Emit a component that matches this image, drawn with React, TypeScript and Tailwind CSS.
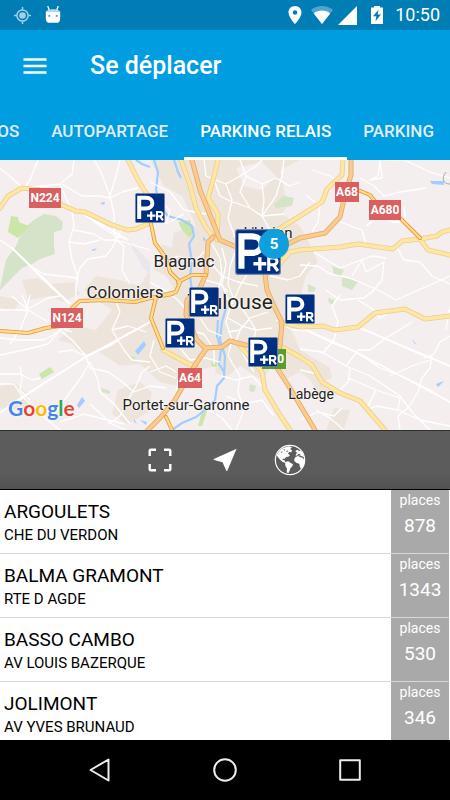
import React from 'react';

interface MapPin {
  id: string;
  x: number;
  y: number;
}

interface MapLabel {
  text: string;
  x: number;
  y: number;
  className: string;
}

interface Parking {
  name: string;
  address: string;
  places: number;
}

const MAP_WIDTH = 450;
const MAP_HEIGHT = 270;

const tabs = ['VÉLOS', 'AUTOPARTAGE', 'PARKING RELAIS', 'PARKING'];

const parkings: Parking[] = [
  { name: 'ARGOULETS', address: 'CHE DU VERDON', places: 878 },
  { name: 'BALMA GRAMONT', address: 'RTE D AGDE', places: 1343 },
  { name: 'BASSO CAMBO', address: 'AV LOUIS BAZERQUE', places: 530 },
  { name: 'JOLIMONT', address: 'AV YVES BRUNAUD', places: 346 },
];

// Centre of each pin on the map canvas
const pins: MapPin[] = [
  { id: 'nord-ouest', x: 150, y: 48 },
  { id: 'ouest', x: 204, y: 142 },
  { id: 'sud-ouest', x: 180, y: 173 },
  { id: 'est', x: 300, y: 149 },
  { id: 'sud-est', x: 263, y: 192 },
];

const labels: MapLabel[] = [
  { text: "L'Union", x: 268, y: 73, className: 'text-[15px]' },
  { text: 'Blagnac', x: 184, y: 102, className: 'text-[17px]' },
  { text: 'Colomiers', x: 125, y: 133, className: 'text-[17px]' },
  { text: 'Toulouse', x: 230, y: 143, className: 'text-[21px]' },
  { text: 'Labège', x: 311, y: 234, className: 'text-[14px]' },
  { text: 'Portet-sur-Garonne', x: 186, y: 245, className: 'text-[15px]' },
];

const shields: MapLabel[] = [
  { text: 'N224', x: 45, y: 38, className: 'w-8 bg-[#d95f60]' },
  { text: 'A68', x: 347, y: 32, className: 'w-6 bg-[#d95f60]' },
  { text: 'A680', x: 385, y: 50, className: 'w-8 bg-[#d95f60]' },
  { text: 'N124', x: 67, y: 158, className: 'w-8 bg-[#d95f60]' },
  { text: 'A64', x: 190, y: 218, className: 'w-6 bg-[#d95f60]' },
  { text: 'E80', x: 274, y: 199, className: 'w-6 bg-[#5b9b31]' },
];

const urbanAreas = [
  'M150 160 L215 160 L300 160 L298 190 L282 214 L300 226 L310 245 L318 262 L306 275 L300 300 L292 330 L300 350 L330 368 L332 378 L316 384 L300 372 L284 380 L272 366 L262 380 L240 366 L228 376 L206 372 L186 388 L160 382 L140 364 L120 366 L96 350 L84 356 L72 344 L58 340 L74 326 L96 330 L112 310 L96 300 L84 290 L96 276 L120 280 L140 286 L150 270 L164 264 L160 240 L176 232 L196 226 L182 196 L164 186Z',
  'M22 280 L38 278 L48 284 L74 282 L80 294 L62 302 L50 296 L28 300Z',
  'M0 386 L14 382 L30 396 L26 410 L0 408Z',
  'M118 390 L140 382 L152 392 L148 412 L128 424 L112 414Z',
  'M310 380 L330 384 L336 396 L318 394Z',
  'M334 408 L350 410 L344 430 L326 430Z',
  'M0 296 L20 300 L14 312 L0 308Z',
  'M112 300 L150 296 L156 320 L140 340 L118 328Z',
];

const cleanAreas = [
  'M236 168 L262 162 L276 176 L262 190 L244 186Z',
  'M160 222 L174 226 L172 248 L160 244Z',
  'M150 268 L166 276 L176 292 L150 290Z',
  'M180 374 L216 366 L212 396 L180 398Z',
  'M236 382 L262 378 L270 400 L244 402Z',
  'M280 170 L300 160 L300 208 L286 200Z',
];

const greenAreas = [
  'M0 288 L6 260 L16 246 L24 228 L34 220 L44 214 L56 216 L63 222 L62 230 L54 232 L54 246 L55 254 L40 259 L32 264 L22 268 L14 276 L0 290Z',
  'M274 204 L284 196 L294 198 L292 206 L276 208Z',
  'M332 266 L344 270 L340 278 L334 274Z',
  'M342 276 L358 282 L352 290 L342 286Z',
  'M308 284 L316 288 L314 292 L308 292Z',
  'M101 388 L110 391 L110 394 L102 392Z',
  'M130 356 L136 357 L137 361 L131 359Z',
  'M250 384 L256 386 L254 392 L249 391Z',
  'M328 298 L334 300 L333 305 L329 303Z',
];

const brightGreenAreas = [
  'M11 216 L18 217 L19 222 L29 226 L18 238 L8 232Z',
  'M178 222 L190 220 L194 232 L190 238 L182 230Z',
  'M39 374 L50 367 L54 372 L42 379Z',
  'M204 404 L208 408 L202 426 L198 426Z',
  'M212 360 L217 362 L216 367 L211 366Z',
];

const waterAreas = [
  'M135 351 L144 341 L146 345 L138 355Z',
  'M77 405 L82 397 L85 401 L79 408Z',
  'M430 181 L444 181 L444 185 L432 184Z',
  'M436 384 L444 381 L438 387Z',
  'M412 339 L417 345 L414 343Z',
  'M134 419 L137 424 L134 422Z M140 420 L147 422 L146 425Z',
  'M100 203 L105 202 L104 205Z M91 250 L97 248 L94 251Z',
  'M203 236 L206 240 L203 241Z',
];

const rivers = [
  'M154 160 L158 172 L156 190 L160 206 L168 216 L182 220 L192 226 L194 236 L189 244 L192 262 L190 276 L192 292 L200 298',
  'M174 160 L178 172 L181 178',
  'M224 292 L226 308 L222 322 L220 340 L225 356 L224 378 L217 386 L215 400 L206 409 L196 417 L182 423 L172 430',
  'M218 320 L217 336 L221 350 L219 364 L224 372',
  'M136 160 L142 164 L150 167',
];

const minorRoads = [
  'M0 168 L22 187 L28 185',
  'M38 160 L30 180 L24 188 L44 186 L60 184 L72 174 L74 160',
  'M60 184 L66 198 L72 211 L74 226 L69 242 L72 260 L78 276 L76 286 L76 300',
  'M62 184 L82 196 L100 196 L110 198 L122 192 L138 188',
  'M94 160 L100 170 L104 180 L110 196 L114 214 L114 230 L116 240 L130 244 L150 250',
  'M120 160 L116 176 L110 196',
  'M74 230 L94 234 L104 240 L116 240',
  'M69 242 L84 244 L100 240',
  'M85 215 L100 226 L116 236 L128 240',
  'M122 228 L112 248 L106 256 L88 259 L80 268 L76 280',
  'M0 240 L12 248 L30 266 L52 288 L70 304',
  'M30 266 L44 274 L78 278',
  'M116 240 L124 246 L122 270 L130 284',
  'M0 310 L26 310 L48 298 L60 296',
  'M22 295 L28 310 L20 330 L10 344',
  'M12 296 L28 310 L48 322',
  'M30 295 L26 312',
  'M0 355 L24 350 L48 344 L62 328 L72 332',
  'M0 338 L20 340 L44 340 L62 330',
  'M62 332 L72 340 L86 356 L90 368 L108 372 L120 380 L134 392',
  'M0 413 L20 398 L46 382 L84 358 L118 340 L140 328 L150 322',
  'M0 374 L20 374 L32 380 L40 378',
  'M20 366 L22 378 L20 390 L30 400',
  'M0 384 L14 384 L22 396 L34 408 L50 422 L60 430',
  'M90 362 L82 376 L66 398 L50 420',
  'M58 352 L72 350 L86 356 L110 346 L130 332',
  'M90 362 L98 380 L100 392 L114 404 L130 424',
  'M114 296 L120 312 L112 330 L124 350 L132 360 L150 362',
  'M112 330 L128 326 L146 332',
  'M150 366 L142 372 L136 386 L128 400 L120 416 L108 424',
  'M60 422 L84 414 L108 420 L124 424',
  'M90 404 L112 424 L126 430',
  'M134 392 L150 386 L166 388',
  'M150 182 L170 192 L184 210 L206 214',
  'M158 200 L170 210 L166 224 L184 214',
  'M204 160 L206 176 L226 184 L240 176 L256 166 L262 160',
  'M226 184 L232 200 L228 218 L236 240',
  'M240 160 L246 176 L262 184 L276 178 L290 186 L300 182',
  'M246 176 L240 192 L250 208 L262 216 L284 214',
  'M262 184 L264 200 L262 216 L270 230',
  'M284 160 L282 176 L276 196 L262 216',
  'M214 180 L220 196 L228 200 L250 208',
  'M212 244 L220 258 L222 276 L218 290',
  'M222 248 L226 264 L222 284 L228 300',
  'M236 250 L230 266 L228 284 L234 300',
  'M210 262 L222 276 L238 282 L258 286',
  'M206 280 L220 284 L228 292',
  'M258 252 L250 270 L240 286 L232 304',
  'M270 276 L288 280 L300 276 L310 262',
  'M206 250 L194 262 L178 256 L166 262',
  'M150 282 L164 290 L178 300 L188 312',
  'M200 318 L208 330 L222 336',
  'M188 330 L204 334 L214 350 L214 364',
  'M236 300 L246 314 L256 330 L252 346',
  'M228 318 L242 326 L256 330 L272 328',
  'M228 332 L240 330 L250 318 L268 312',
  'M242 326 L236 340 L244 356 L254 372',
  'M232 300 L226 322 L232 340 L228 356 L240 376 L238 392',
  'M150 372 L166 366 L180 374 L176 390',
  'M154 340 L150 356 L160 372 L176 378',
  'M180 348 L190 360 L206 358 L220 362',
  'M222 376 L236 380 L252 376 L262 386',
  'M226 396 L244 404 L262 400 L274 416',
  'M238 392 L244 410 L236 430',
  'M205 408 L222 418 L232 430',
  'M276 320 L292 330 L306 330 L330 342 L356 352 L380 368 L406 378 L430 390 L450 402',
  'M300 349 L322 352 L346 366 L370 376 L400 396 L412 412 L430 430',
  'M322 354 L334 340 L338 322 L332 306 L340 295',
  'M346 366 L358 350 L370 350 L386 338 L412 322',
  'M380 160 L378 176 L370 180 L382 178 L380 160',
  'M360 178 L374 186 L384 196 L400 192 L426 188',
  'M385 160 L404 160 L430 172 L450 178',
  'M312 170 L330 176 L342 184',
  'M306 195 L320 206 L318 222 L312 232',
  'M340 222 L362 230 L366 244',
  'M366 226 L380 216 L392 222 L408 222',
  'M404 206 L406 222 L412 228',
  'M314 252 L330 262 L340 268 L356 262 L372 256 L386 258',
  'M300 265 L318 266 L330 274 L350 278 L378 290 L396 300 L450 276',
  'M352 276 L362 260 L366 272 L384 262 L382 280 L372 292',
  'M396 246 L404 260 L420 262 L432 276 L450 284',
  'M374 290 L364 298 L340 300 L326 290',
  'M358 300 L374 310 L380 318 L396 308',
  'M360 328 L384 338 L410 350 L430 358 L450 366',
  'M424 358 L434 354 L440 342 L450 336',
  'M432 356 L430 368 L422 378 L418 392 L408 408 L398 416 L400 430',
  'M450 306 L446 330',
  'M350 368 L348 382 L340 390',
  'M348 378 L376 390 L400 398 L398 410',
  'M376 390 L366 410 L376 406 L398 410 L420 420 L450 426',
  'M390 376 L412 366 L430 360',
  'M316 410 L330 418 L344 430',
  'M300 420 L318 412 L334 416 L342 408',
  'M300 370 L318 374 L322 382',
];

const yellowRoads = [
  'M0 208 L8 196 L22 188 L40 190 L62 205 L76 211 L85 212 L110 224 L127 230 L136 229 L150 223',
  'M128 160 L138 180 L148 196',
  'M181 160 L190 185 L196 208 L205 226 L214 238',
  'M218 160 L212 184 L208 198 L218 214 L217 240',
  'M274 232 L300 216 L322 202 L327 189 L342 175 L343 160',
  'M280 264 L290 252 L300 250 L340 247 L358 244 L393 249 L402 241 L420 239 L437 236 L442 232 L450 230',
  'M420 239 L428 250 L450 255',
  'M163 350 L185 362 L196 367',
  'M240 346 L262 372 L265 390 L280 415 L290 430',
  'M280 322 L300 327 L323 326 L335 330 L358 327 L375 313 L405 309 L425 319 L450 316',
  'M280 346 L300 357 L312 365 L322 382 L340 393 L360 401 L385 430',
];

const orangeRoads = [
  'M192 160 L200 190 L210 215 L220 240 L234 246 L262 250 L284 246 L300 238 L325 233 L340 217 L345 195 L351 175 L351 160',
  'M213 237 L208 242 L206 274 L200 288 L187 300 L186 315 L197 340 L205 348 L222 347 L230 341 L245 345 L280 347',
  'M262 250 L267 290 L274 306 L282 322 L280 345 L275 365 L288 385 L300 405 L315 430',
  'M206 349 L195 365 L175 400 L160 418 L146 432',
];

const trunkRoads = [
  'M148 196 L151 224 L155 243 L166 258 L170 272 L180 282 L176 292 L156 297 L151 318 L163 348',
  'M178 282 L192 275 L206 275',
  'M0 331 L28 333 L46 328 L66 325 L72 308 L80 301 L105 300 L135 302 L150 298 L172 294',
  'M358 190 L370 195 L380 208 L400 218 L420 238',
  'M166 417 L172 430',
];

const Roads: React.FC<{ paths: string[]; edge: string; fill: string; width: number }> = ({
  paths,
  edge,
  fill,
  width
}) => (
  <g fill="none" strokeLinejoin="round" strokeLinecap="round">
    <path d={paths.join(' ')} stroke={edge} strokeWidth={width} />
    <path d={paths.join(' ')} stroke={fill} strokeWidth={width - 1.6} />
  </g>
);

const MapBackground = () => (
  <svg
    className="block h-full w-full"
    viewBox="0 160 450 270"
    preserveAspectRatio="none"
    aria-hidden="true"
  >
    <rect y="160" width="450" height="270" fill="#f5eeee" />
    <path d={urbanAreas.join(' ')} fill="#ede5dc" />
    <path d={cleanAreas.join(' ')} fill="#f5eeee" />
    <path d="M128 240 L150 262 L150 276 L142 266Z" fill="#e9e6ec" />
    <path d={greenAreas.join(' ')} fill="#d5e3c8" />
    <path d={brightGreenAreas.join(' ')} fill="#cbe6a8" />
    <path d={waterAreas.join(' ')} fill="#a3ccff" />
    <path d={rivers.join(' ')} fill="none" stroke="#a3ccff" strokeWidth="2.2" />
    <path d={minorRoads.join(' ')} fill="none" stroke="#ffffff" strokeWidth="1.3" strokeLinejoin="round" />
    <path d="M0 413 L46 382 L84 358 L150 322 M12 248 L70 304 M85 215 L128 240 M306 330 L356 352 L450 402 M360 328 L450 366" fill="none" stroke="#ffffff" strokeWidth="1.8" />
    <path d="M446 172 C441 178 443 184 450 184" fill="none" stroke="#aaa" />
    <Roads paths={yellowRoads} edge="#e9cf8d" fill="#ffe6a2" width={5} />
    <Roads paths={orangeRoads} edge="#e2a868" fill="#fbcb8b" width={5} />
    <Roads paths={trunkRoads} edge="#e49a35" fill="#ffd98c" width={4} />
  </svg>
);

const ParkAndRideIcon: React.FC<{ className: string }> = ({ className }) => (
  <svg className={className} viewBox="0 0 30 30" aria-hidden="true">
    <rect x="0.4" y="0.4" width="29.2" height="29.2" rx="1.5" fill="#002f80" stroke="#7387b4" strokeWidth="0.8" />
    <path d="M4.2 26 V4.8 H11 C19.5 4.8 19.5 15.6 11 15.6 H4.2" fill="none" stroke="#fff" strokeWidth="4" />
    <path d="M16.2 17.2 V28 M11 22.6 H20.6" stroke="#002f80" strokeWidth="4.6" />
    <path d="M16.2 18.4 V27 M12 22.7 H20.4" stroke="#fff" strokeWidth="2.2" />
    <path d="M22 27.4 V18.9 H25 C28.2 18.9 28.2 23.3 25 23.3 H22 M25 23.3 L28 27.4" fill="none" stroke="#fff" strokeWidth="2" />
  </svg>
);

const StatusBar = () => (
  <div className="flex h-[30px] shrink-0 items-center bg-[#007db5] pr-[10px] pl-[14px] text-white">
    <svg className="h-[17px] w-[17px]" viewBox="0 0 17 17" fill="none" stroke="#9fd0e8" aria-hidden="true">
      <circle cx="8.5" cy="8.5" r="5.6" strokeWidth="1.5" />
      <circle cx="8.5" cy="8.5" r="3.3" fill="#9fd0e8" stroke="none" />
      <path d="M8.5 0 V3 M8.5 14 V17 M0 8.5 H3 M14 8.5 H17" strokeWidth="1.5" />
    </svg>
    <svg className="ml-[14px] h-[18px] w-4" viewBox="0 0 16 18" aria-hidden="true">
      <path d="M2.8 0 L4.2 4 M13.2 0 L11.8 4" stroke="#fff" strokeWidth="1.3" />
      <path d="M0.8 5.6 H15.2 V10 C15.2 14.5 14.8 16.8 12 16.8 H4 C1.2 16.8 0.8 14.5 0.8 10Z" fill="#fff" />
      <path d="M1 5.8 C1.8 2.4 14.2 2.4 15 5.8Z" fill="#b9dceb" />
      <path d="M3.4 9 H5.2 V10.8 H3.4Z M10.8 9 H12.6 V10.8 H10.8Z" fill="#3f9dc7" />
    </svg>
    <div className="ml-auto flex items-center">
      <svg className="h-[18px] w-[14px]" viewBox="0 0 14 18" aria-hidden="true">
        <path d="M7 0 C3.3 0 0.5 2.8 0.5 6.4 C0.5 11 7 18 7 18 C7 18 13.5 11 13.5 6.4 C13.5 2.8 10.7 0 7 0Z M7 4.2 A2.3 2.3 0 1 1 7 8.8 A2.3 2.3 0 1 1 7 4.2Z" fill="#fff" fillRule="evenodd" />
      </svg>
      <svg className="ml-[9px] h-[18px] w-[22px]" viewBox="0 0 22 18" aria-hidden="true">
        <path d="M0 4 C6 -1.2 16 -1.2 22 4 L11 18Z" fill="#4da6cf" />
        <path d="M2.8 7.4 C7.5 3.6 14.5 3.6 19.2 7.4 L11 18Z" fill="#fff" />
      </svg>
      <svg className="ml-[5px] h-[19px] w-[19px]" viewBox="0 0 19 19" aria-hidden="true">
        <path d="M0 19 L19 0 V19Z" fill="#fff" />
      </svg>
      <svg className="ml-[14px] h-[18px] w-3" viewBox="0 0 12 18" aria-hidden="true">
        <path d="M0 1.5 H3 V0 H9 V1.5 H12 V18 H0Z" fill="#fff" />
        <path d="M7.5 3.8 L2 10.2 H5.3 L4.5 15.3 L10 8.6 H6.7Z" fill="#007db5" />
      </svg>
      <span className="ml-3 text-[18px] leading-5">10:50</span>
    </div>
  </div>
);

const Header = () => (
  <header className="shrink-0 bg-[#009de0] text-white">
    <div className="flex h-[72px] items-center px-[23px]">
      <button type="button" aria-label="Menu">
        <svg className="block h-4 w-6" viewBox="0 0 24 16" aria-hidden="true">
          <path d="M0.5 1.5 H23.5 M0.5 8 H23.5 M0.5 14.5 H23.5" stroke="#fff" strokeWidth="2.5" />
        </svg>
      </button>
      <h1 className="ml-[43px] text-[25px] font-medium leading-8">Se déplacer</h1>
    </div>
    <nav className="flex h-[58px] justify-end overflow-hidden">
      {tabs.map((tab) => (
        <button
          key={tab}
          type="button"
          className={
            tab === 'PARKING RELAIS'
              ? 'shrink-0 border-b-[3px] border-white px-4 pt-1 text-[17px] font-medium'
              : 'shrink-0 border-b-[3px] border-transparent px-4 pt-1 text-[17px] font-medium text-[#e2ecf2]'
          }
        >
          {tab}
        </button>
      ))}
    </nav>
  </header>
);

const toPosition = (x: number, y: number) => ({
  left: `${(x / MAP_WIDTH) * 100}%`,
  top: `${(y / MAP_HEIGHT) * 100}%`,
});

const ParkingMap = () => (
  <section className="relative h-[270px] shrink-0 overflow-hidden" aria-label="Carte">
    <MapBackground />
    {shields.map((shield) => (
      <span
        key={shield.text}
        className={`absolute -translate-x-1/2 -translate-y-1/2 text-center text-[12px] font-bold leading-5 text-white ${shield.className}`}
        style={toPosition(shield.x, shield.y)}
      >
        {shield.text}
      </span>
    ))}
    {labels.map((label) => (
      <span
        key={label.text}
        className={`absolute -translate-x-1/2 -translate-y-1/2 whitespace-nowrap text-[#222] [text-shadow:0_0_2px_#fff,0_0_2px_#fff] ${label.className}`}
        style={toPosition(label.x, label.y)}
      >
        {label.text}
      </span>
    ))}
    {pins.map((pin) => (
      <button
        key={pin.id}
        type="button"
        aria-label="Parking relais"
        className="absolute -translate-x-1/2 -translate-y-1/2"
        style={toPosition(pin.x, pin.y)}
      >
        <ParkAndRideIcon className="block h-[30px] w-[30px]" />
      </button>
    ))}
    <button
      type="button"
      className="absolute -translate-x-1/2 -translate-y-1/2"
      style={toPosition(258, 92)}
    >
      <ParkAndRideIcon className="block h-[46px] w-[46px]" />
      <span className="absolute top-0 -right-2 h-[30px] w-[30px] rounded-full bg-[#109fdd] text-center text-[15px] font-bold leading-[30px] text-white">
        5
      </span>
    </button>
    <div className="absolute bottom-2 left-2 font-['Lato',sans-serif] text-[21px] font-bold leading-7 [text-shadow:0_0_2px_#fff,0_0_2px_#fff]">
      <span className="text-[#4285f4]">G</span>
      <span className="text-[#ea4335]">o</span>
      <span className="text-[#fbbc05]">o</span>
      <span className="text-[#4285f4]">g</span>
      <span className="text-[#34a853]">l</span>
      <span className="text-[#ea4335]">e</span>
    </div>
  </section>
);

const MapToolbar = () => (
  <div className="flex h-[60px] shrink-0 items-stretch justify-center border-t border-b border-t-[#2b3035] border-b-black bg-[#5b5b5b] bg-linear-to-b from-[#5c5c5c] from-70% to-[#525252]">
    <button type="button" aria-label="Plein écran" className="flex w-[65px] items-center justify-center">
      <svg className="h-6 w-6" viewBox="0 0 24 24" fill="none" stroke="#fff" strokeWidth="2.4" aria-hidden="true">
        <path d="M1.7 8 V2.8 Q1.7 1.7 2.8 1.7 H8 M16 1.7 H21.2 Q22.3 1.7 22.3 2.8 V8 M22.3 16 V21.2 Q22.3 22.3 21.2 22.3 H16 M8 22.3 H2.8 Q1.7 22.3 1.7 21.2 V16" />
      </svg>
    </button>
    <button type="button" aria-label="Me localiser" className="flex w-[65px] items-center justify-center">
      <svg className="h-6 w-6" viewBox="0 0 24 24" aria-hidden="true">
        <path d="M23.6 0.8 L0.8 11 Q0.2 11.6 1 12 L9.5 14.3 L13.2 22.6 Q13.8 23.6 14.4 22.6Z" fill="#fff" />
      </svg>
    </button>
    <button type="button" aria-label="Type de carte" className="flex w-[65px] items-center justify-center">
      <svg className="h-8 w-8" viewBox="0 0 96 96" aria-hidden="true">
        <circle cx="48" cy="48" r="44" fill="none" stroke="#fff" strokeWidth="3.5" />
        <path d="M8 34 L14 23 L23 14 L34 10 L44 7 L54 9 L49 15 L55 20 L51 25 L45 24 L42 29 L48 34 L43 38 L36 39 L32 44 L27 44 L25 49 L31 48 L33 53 L38 55 L34 57 L25 53 L19 48 L13 41Z" fill="#fff" />
        <path d="M28 15 L34 17 L31 20Z M36 22 L42 19 L40 25Z M20 24 L25 22 L24 27Z" fill="#5b5b5b" />
        <path d="M36 53 L43 52 L49 56 L57 61 L54 68 L49 73 L47 80 L43 88 L38 85 L39 74 L35 67 L33 60Z" fill="#fff" />
        <path d="M64 21 L70 17 L74 20 L80 20 L87 29 L91 40 L88 38 L82 36 L77 34 L71 34 L65 35 L66 29 L71 27 L67 25Z" fill="#fff" />
        <path d="M65 38 L73 36 L79 40 L86 41 L91 48 L91 60 L85 72 L81 75 L77 67 L76 59 L68 57 L61 51 L61 45Z" fill="#fff" />
        <path d="M70 30 L76 30 L81 33 L73 33Z" fill="#5b5b5b" />
      </svg>
    </button>
  </div>
);

const ParkingList = () => (
  <ul className="min-h-0 flex-1 overflow-y-auto bg-white [scrollbar-width:none]">
    {parkings.map((parking) => (
      <li key={parking.name} className="flex h-16 border-b border-[#d8d8d8]">
        <div className="min-w-0 flex-1 pt-[10px] pl-1 text-black">
          <h2 className="text-[19px] leading-6">{parking.name}</h2>
          <p className="text-[15px] leading-[22px]">{parking.address}</p>
        </div>
        <div className="mr-px w-[58px] bg-[#a9a9a9] text-center text-white">
          <p className="text-[14px] leading-5">places</p>
          <p className="pt-1 text-[19px] leading-6">{parking.places}</p>
        </div>
      </li>
    ))}
  </ul>
);

const NavigationBar = () => (
  <nav className="flex h-[60px] shrink-0 items-center justify-center gap-[101px] bg-black">
    <button type="button" aria-label="Retour">
      <svg className="block h-6 w-6" viewBox="0 0 24 24" fill="none" stroke="#ececec" strokeWidth="2" strokeLinejoin="round" aria-hidden="true">
        <path d="M20.5 1.5 V22.5 L2.5 12Z" />
      </svg>
    </button>
    <button type="button" aria-label="Accueil">
      <svg className="block h-6 w-6" viewBox="0 0 24 24" fill="none" stroke="#ececec" strokeWidth="2" aria-hidden="true">
        <circle cx="12" cy="12" r="10.8" />
      </svg>
    </button>
    <button type="button" aria-label="Applications récentes">
      <svg className="block h-6 w-6" viewBox="0 0 24 24" fill="none" stroke="#ececec" strokeWidth="2" strokeLinejoin="round" aria-hidden="true">
        <rect x="2.2" y="2.2" width="19.6" height="19.6" />
      </svg>
    </button>
  </nav>
);

export default function App() {
  return (
    <div className="flex h-screen flex-col overflow-hidden font-['Roboto',sans-serif]">
      <StatusBar />
      <Header />
      <ParkingMap />
      <MapToolbar />
      <ParkingList />
      <NavigationBar />
    </div>
  );
}
